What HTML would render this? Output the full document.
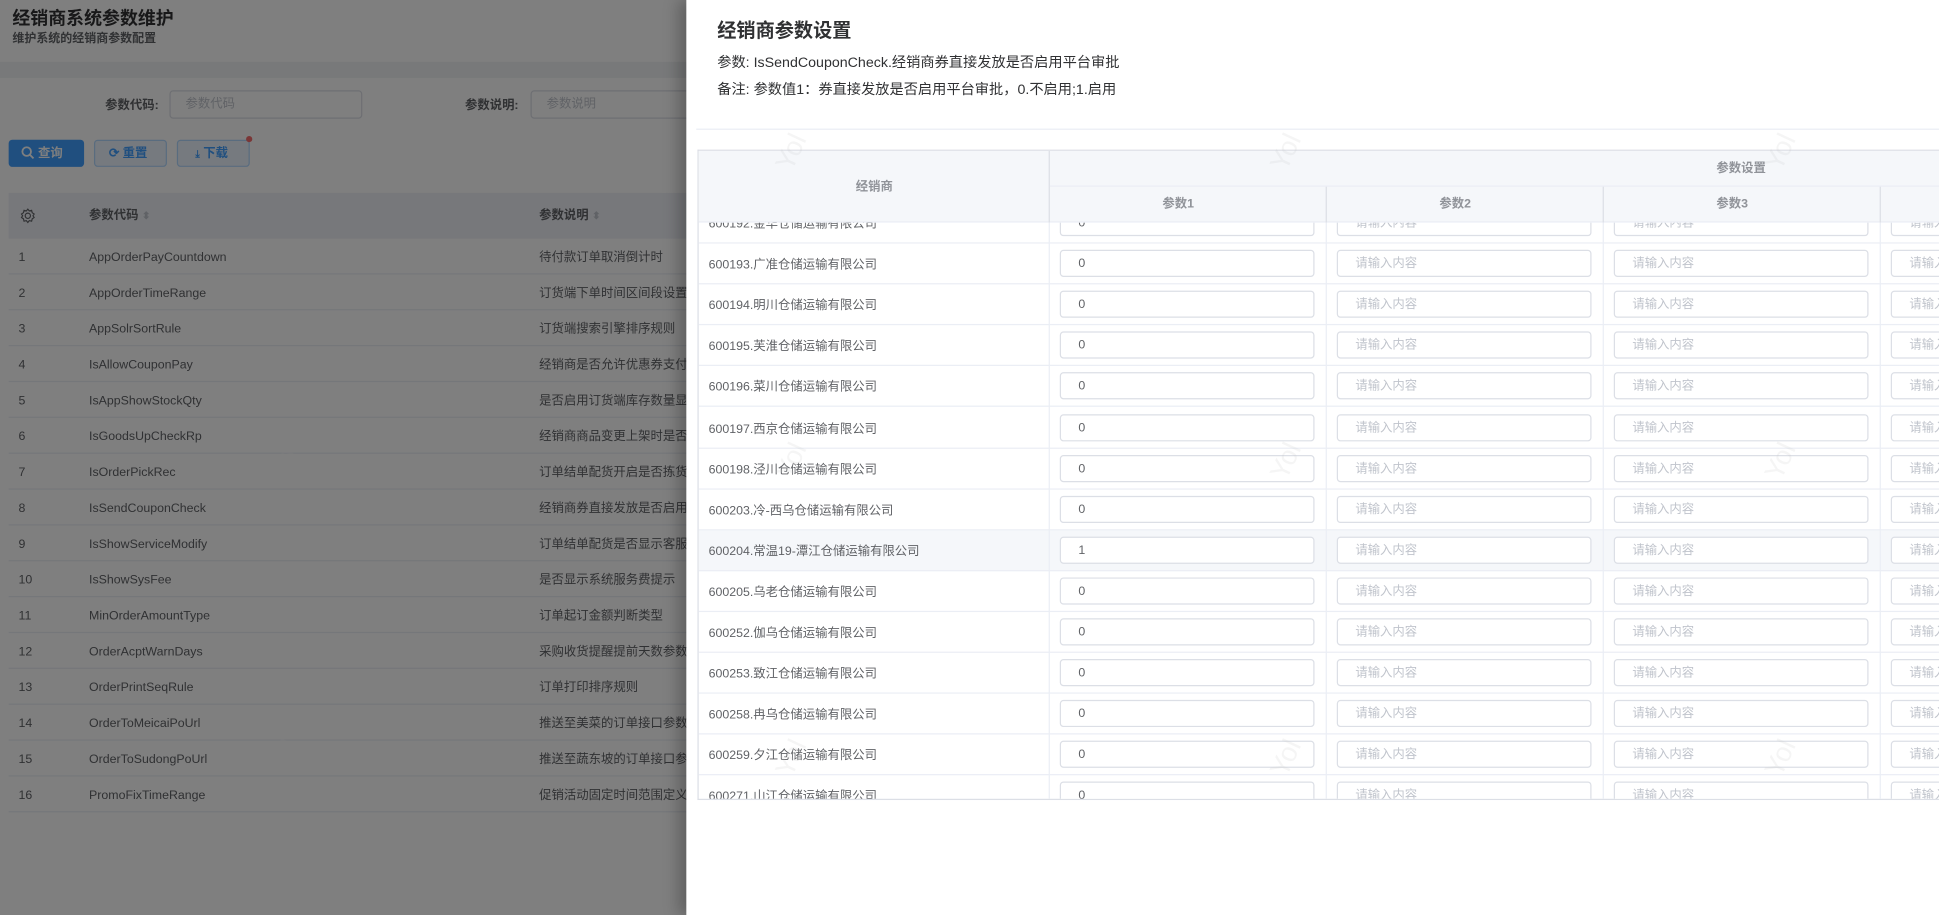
<!DOCTYPE html>
<html><head><meta charset="utf-8">
<style>
*{box-sizing:border-box;margin:0;padding:0}
html,body{width:1939px;height:915px;overflow:hidden;background:#fff}
body{font-family:"Liberation Sans","Noto Sans CJK SC",sans-serif}
#w{position:absolute;left:0;top:0;width:1568px;height:740px;transform:scale(1.23661,1.2365);transform-origin:0 0;overflow:hidden;background:#fff}
.a{position:absolute;white-space:nowrap}
.row{position:absolute;left:7px;width:560px;height:29px;border-bottom:1px solid #ebeef5;font-size:10px;color:#606266;white-space:nowrap}
.row span{position:absolute;top:2px;line-height:28px;white-space:nowrap}
.ov{position:absolute;left:0;top:0;width:1568px;height:740px;background:rgba(0,0,0,.5)}
.dr{position:absolute;left:555px;top:0;width:1013px;height:740px;background:#fff;box-shadow:-6px 0 12px rgba(0,0,0,.25)}
.wm{position:absolute;color:rgba(200,200,200,.18);font-size:22px;transform:rotate(-65deg)}
.br{position:absolute;left:0;width:1100px;height:33.1px;border-bottom:1px solid #ebeef5;font-size:10px;color:#606266}
.br .n{position:absolute;left:8px;top:2px;line-height:32px}
.inp{position:absolute;top:5px;height:22px;width:206px;border:1px solid #dcdfe6;border-radius:3px;background:#fff;font-size:10px;line-height:22px;padding:0 0 0 14px;color:#606266}
.inp.p{color:#c0c4cc}
.vl{position:absolute;top:0;width:1px;height:100%;background:#ebeef5}
</style></head><body><div id="w">
<div class="a" style="left:10px;top:6px;font-size:14.5px;line-height:20px;font-weight:bold;color:#303133">经销商系统参数维护</div>
<div class="a" style="left:10px;top:25px;font-size:9.7px;line-height:13px;font-weight:bold;color:#606266">维护系统的经销商参数配置</div>
<div class="a" style="left:0;top:50px;width:1568px;height:13px;background:#f0f2f5"></div>
<div class="a" style="left:85px;top:79px;font-size:10px;line-height:13px;font-weight:bold;color:#606266">参数代码:</div>
<div class="a" style="left:137px;top:73px;width:156px;height:23px;border:1px solid #dcdfe6;border-radius:3px;font-size:10px;color:#c0c4cc;line-height:22px;padding:0 0 0 12px">参数代码</div>
<div class="a" style="left:376px;top:79px;font-size:10px;line-height:13px;font-weight:bold;color:#606266">参数说明:</div>
<div class="a" style="left:429px;top:73px;width:156px;height:23px;border:1px solid #dcdfe6;border-radius:3px;font-size:10px;color:#c0c4cc;line-height:22px;padding:0 0 0 12px">参数说明</div>
<div class="a" style="left:7px;top:113px;width:61px;height:22px;background:#409eff;border-radius:3px;color:#fff;font-size:10px;line-height:23px;font-weight:bold;padding:0 0 0 10px"><svg width="11" height="11" viewBox="0 0 12 12" style="vertical-align:-2px"><circle cx="5" cy="5" r="3.8" fill="none" stroke="#fff" stroke-width="1.6"/><path d="M8 8l3 3" stroke="#fff" stroke-width="1.6"/></svg> 查询</div>
<div class="a" style="left:76px;top:113px;width:59px;height:22px;background:#ecf5ff;border:1px solid #b3d8ff;border-radius:3px;color:#409eff;font-size:10px;line-height:21px;font-weight:bold;padding:0 0 0 11px">⟳ 重置</div>
<div class="a" style="left:143px;top:113px;width:59px;height:22px;background:#ecf5ff;border:1px solid #b3d8ff;border-radius:3px;color:#409eff;font-size:10px;line-height:21px;font-weight:bold;padding:0 0 0 14px"><span style="font-size:8px">⤓</span> 下载</div>
<div class="a" style="left:199px;top:110px;width:5px;height:5px;border-radius:50%;background:#f56c6c"></div>
<div class="a" style="left:7px;top:156px;width:560px;height:37px;background:#eef0f6"></div>
<div class="a" style="left:16px;top:168px;"><svg width="13" height="13" viewBox="0 0 14 14"><circle cx="7" cy="7" r="2.3" fill="none" stroke="#606266" stroke-width="1"/><path d="M7 1.2l1.3 1.6 2-.5.5 2 1.7 1.2-1 1.5 1 1.5-1.7 1.2-.5 2-2-.5L7 12.8 5.7 11.2l-2 .5-.5-2L1.5 8.5l1-1.5-1-1.5 1.7-1.2.5-2 2 .5z" fill="none" stroke="#606266" stroke-width="1"/></svg></div>
<div class="a" style="left:72px;top:168px;font-size:10px;line-height:13px;font-weight:bold;color:#606266">参数代码 <span style="color:#c0c4cc;font-size:8px">⬍</span></div>
<div class="a" style="left:436px;top:168px;font-size:10px;line-height:13px;font-weight:bold;color:#606266">参数说明 <span style="color:#c0c4cc;font-size:8px">⬍</span></div>
<div class="row" style="top:193px"><span style="left:8px">1</span><span style="left:65px">AppOrderPayCountdown</span><span style="left:429px">待付款订单取消倒计时</span></div>
<div class="row" style="top:222px"><span style="left:8px">2</span><span style="left:65px">AppOrderTimeRange</span><span style="left:429px">订货端下单时间区间段设置</span></div>
<div class="row" style="top:251px"><span style="left:8px">3</span><span style="left:65px">AppSolrSortRule</span><span style="left:429px">订货端搜索引擎排序规则</span></div>
<div class="row" style="top:280px"><span style="left:8px">4</span><span style="left:65px">IsAllowCouponPay</span><span style="left:429px">经销商是否允许优惠券支付</span></div>
<div class="row" style="top:309px"><span style="left:8px">5</span><span style="left:65px">IsAppShowStockQty</span><span style="left:429px">是否启用订货端库存数量显示</span></div>
<div class="row" style="top:338px"><span style="left:8px">6</span><span style="left:65px">IsGoodsUpCheckRp</span><span style="left:429px">经销商商品变更上架时是否检查</span></div>
<div class="row" style="top:367px"><span style="left:8px">7</span><span style="left:65px">IsOrderPickRec</span><span style="left:429px">订单结单配货开启是否拣货确认</span></div>
<div class="row" style="top:396px"><span style="left:8px">8</span><span style="left:65px">IsSendCouponCheck</span><span style="left:429px">经销商券直接发放是否启用平台</span></div>
<div class="row" style="top:425px"><span style="left:8px">9</span><span style="left:65px">IsShowServiceModify</span><span style="left:429px">订单结单配货是否显示客服修改</span></div>
<div class="row" style="top:454px"><span style="left:8px">10</span><span style="left:65px">IsShowSysFee</span><span style="left:429px">是否显示系统服务费提示</span></div>
<div class="row" style="top:483px"><span style="left:8px">11</span><span style="left:65px">MinOrderAmountType</span><span style="left:429px">订单起订金额判断类型</span></div>
<div class="row" style="top:512px"><span style="left:8px">12</span><span style="left:65px">OrderAcptWarnDays</span><span style="left:429px">采购收货提醒提前天数参数设置</span></div>
<div class="row" style="top:541px"><span style="left:8px">13</span><span style="left:65px">OrderPrintSeqRule</span><span style="left:429px">订单打印排序规则</span></div>
<div class="row" style="top:570px"><span style="left:8px">14</span><span style="left:65px">OrderToMeicaiPoUrl</span><span style="left:429px">推送至美菜的订单接口参数设置</span></div>
<div class="row" style="top:599px"><span style="left:8px">15</span><span style="left:65px">OrderToSudongPoUrl</span><span style="left:429px">推送至蔬东坡的订单接口参数设置</span></div>
<div class="row" style="top:628px"><span style="left:8px">16</span><span style="left:65px">PromoFixTimeRange</span><span style="left:429px">促销活动固定时间范围定义</span></div>
<div class="wm" style="left:215px;top:115px;color:rgba(255,255,255,.35)">Yol</div>
<div class="wm" style="left:215px;top:360px;color:rgba(255,255,255,.35)">Yol</div>
<div class="wm" style="left:215px;top:600px;color:rgba(255,255,255,.35)">Yol</div>
<div class="ov"></div>
<div class="dr">
<div class="a" style="left:25px;top:16px;font-size:15.5px;line-height:20px;font-weight:bold;color:#303133">经销商参数设置</div>
<div class="a" style="left:25px;top:44px;font-size:11.5px;line-height:15px;color:#303133">参数: IsSendCouponCheck.经销商券直接发放是否启用平台审批</div>
<div class="a" style="left:25px;top:66px;font-size:11.5px;line-height:15px;color:#303133">备注: 参数值1：券直接发放是否启用平台审批，0.不启用;1.启用</div>
<div class="a" style="left:8px;top:104px;width:1010px;height:1px;background:#ebeef5"></div>
<div class="a" style="left:9px;top:121px;width:1010px;height:526px;border:1px solid #dcdfe6;border-right:none;overflow:hidden">
 <div class="a" style="left:0;top:58px;width:1010px;height:466px;overflow:hidden">
  <div class="a" style="left:0;top:-16px;width:1010px;height:520px">
   <div class="br" style="top:0"><span class="n">600192.金华仓储运输有限公司</span><div class="inp" style="left:292px">0</div><div class="inp p" style="left:516px">请输入内容</div><div class="inp p" style="left:740px">请输入内容</div><div class="inp p" style="left:964px">请输入内容</div></div>
   <div class="br" style="top:33.1px"><span class="n">600193.广准仓储运输有限公司</span><div class="inp" style="left:292px">0</div><div class="inp p" style="left:516px">请输入内容</div><div class="inp p" style="left:740px">请输入内容</div><div class="inp p" style="left:964px">请输入内容</div></div>
   <div class="br" style="top:66.2px"><span class="n">600194.明川仓储运输有限公司</span><div class="inp" style="left:292px">0</div><div class="inp p" style="left:516px">请输入内容</div><div class="inp p" style="left:740px">请输入内容</div><div class="inp p" style="left:964px">请输入内容</div></div>
   <div class="br" style="top:99.3px"><span class="n">600195.芙淮仓储运输有限公司</span><div class="inp" style="left:292px">0</div><div class="inp p" style="left:516px">请输入内容</div><div class="inp p" style="left:740px">请输入内容</div><div class="inp p" style="left:964px">请输入内容</div></div>
   <div class="br" style="top:132.4px"><span class="n">600196.菜川仓储运输有限公司</span><div class="inp" style="left:292px">0</div><div class="inp p" style="left:516px">请输入内容</div><div class="inp p" style="left:740px">请输入内容</div><div class="inp p" style="left:964px">请输入内容</div></div>
   <div class="br" style="top:165.5px"><span class="n">600197.西京仓储运输有限公司</span><div class="inp" style="left:292px">0</div><div class="inp p" style="left:516px">请输入内容</div><div class="inp p" style="left:740px">请输入内容</div><div class="inp p" style="left:964px">请输入内容</div></div>
   <div class="br" style="top:198.6px"><span class="n">600198.泾川仓储运输有限公司</span><div class="inp" style="left:292px">0</div><div class="inp p" style="left:516px">请输入内容</div><div class="inp p" style="left:740px">请输入内容</div><div class="inp p" style="left:964px">请输入内容</div></div>
   <div class="br" style="top:231.7px"><span class="n">600203.冷-西乌仓储运输有限公司</span><div class="inp" style="left:292px">0</div><div class="inp p" style="left:516px">请输入内容</div><div class="inp p" style="left:740px">请输入内容</div><div class="inp p" style="left:964px">请输入内容</div></div>
   <div class="br" style="top:264.8px;background:#f5f7fa"><span class="n">600204.常温19-潭江仓储运输有限公司</span><div class="inp" style="left:292px">1</div><div class="inp p" style="left:516px">请输入内容</div><div class="inp p" style="left:740px">请输入内容</div><div class="inp p" style="left:964px">请输入内容</div></div>
   <div class="br" style="top:297.9px"><span class="n">600205.乌老仓储运输有限公司</span><div class="inp" style="left:292px">0</div><div class="inp p" style="left:516px">请输入内容</div><div class="inp p" style="left:740px">请输入内容</div><div class="inp p" style="left:964px">请输入内容</div></div>
   <div class="br" style="top:331px"><span class="n">600252.伽乌仓储运输有限公司</span><div class="inp" style="left:292px">0</div><div class="inp p" style="left:516px">请输入内容</div><div class="inp p" style="left:740px">请输入内容</div><div class="inp p" style="left:964px">请输入内容</div></div>
   <div class="br" style="top:364.1px"><span class="n">600253.致江仓储运输有限公司</span><div class="inp" style="left:292px">0</div><div class="inp p" style="left:516px">请输入内容</div><div class="inp p" style="left:740px">请输入内容</div><div class="inp p" style="left:964px">请输入内容</div></div>
   <div class="br" style="top:397.2px"><span class="n">600258.冉乌仓储运输有限公司</span><div class="inp" style="left:292px">0</div><div class="inp p" style="left:516px">请输入内容</div><div class="inp p" style="left:740px">请输入内容</div><div class="inp p" style="left:964px">请输入内容</div></div>
   <div class="br" style="top:430.3px"><span class="n">600259.夕江仓储运输有限公司</span><div class="inp" style="left:292px">0</div><div class="inp p" style="left:516px">请输入内容</div><div class="inp p" style="left:740px">请输入内容</div><div class="inp p" style="left:964px">请输入内容</div></div>
   <div class="br" style="top:463.4px"><span class="n">600271.山江仓储运输有限公司</span><div class="inp" style="left:292px">0</div><div class="inp p" style="left:516px">请输入内容</div><div class="inp p" style="left:740px">请输入内容</div><div class="inp p" style="left:964px">请输入内容</div></div>
   <div class="vl" style="left:283px"></div><div class="vl" style="left:507px"></div><div class="vl" style="left:731px"></div><div class="vl" style="left:955px"></div>
  </div>
 </div>
 <div class="a" style="left:0;top:0;width:1010px;height:58px;background:#f5f7fa;border-bottom:1px solid #ebeef5;font-size:10px;line-height:13px;font-weight:bold;color:#909399">
  <div class="a" style="left:283px;top:0;width:1px;height:58px;background:#dcdfe6"></div>
  <div class="a" style="left:284px;top:28px;width:800px;height:1px;background:#ebeef5"></div>
  <div class="a" style="left:507px;top:29px;width:1px;height:29px;background:#dcdfe6"></div>
  <div class="a" style="left:731px;top:29px;width:1px;height:29px;background:#dcdfe6"></div>
  <div class="a" style="left:955px;top:29px;width:1px;height:29px;background:#dcdfe6"></div>
  <div class="a" style="left:127px;top:23px">经销商</div>
  <div class="a" style="left:823px;top:8px">参数设置</div>
  <div class="a" style="left:375px;top:37px">参数1</div>
  <div class="a" style="left:599px;top:37px">参数2</div>
  <div class="a" style="left:823px;top:37px">参数3</div>
 </div>
</div>
<div class="wm" style="left:70px;top:110px">Yol</div>
<div class="wm" style="left:470px;top:110px">Yol</div>
<div class="wm" style="left:870px;top:110px">Yol</div>
<div class="wm" style="left:70px;top:360px">Yol</div>
<div class="wm" style="left:470px;top:360px">Yol</div>
<div class="wm" style="left:870px;top:360px">Yol</div>
<div class="wm" style="left:70px;top:600px">Yol</div>
<div class="wm" style="left:470px;top:600px">Yol</div>
<div class="wm" style="left:870px;top:600px">Yol</div>
</div>
</div></body></html>
